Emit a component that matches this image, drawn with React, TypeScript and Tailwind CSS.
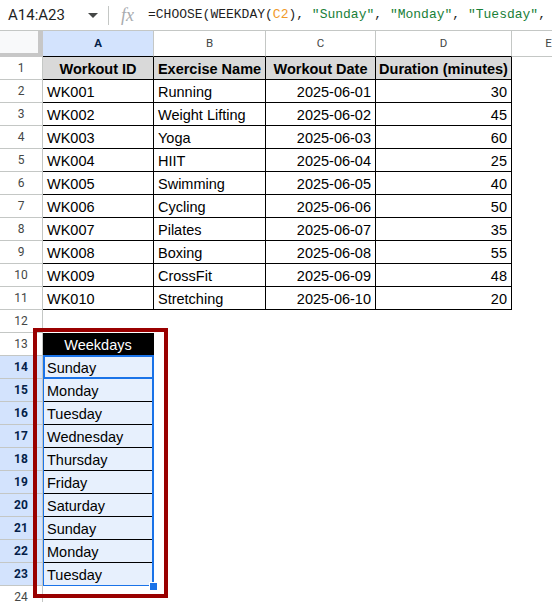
import React from 'react';

type Workout = [string, string, string, number];

const workouts: Workout[] = [
  ['WK001', 'Running', '2025-06-01', 30],
  ['WK002', 'Weight Lifting', '2025-06-02', 45],
  ['WK003', 'Yoga', '2025-06-03', 60],
  ['WK004', 'HIIT', '2025-06-04', 25],
  ['WK005', 'Swimming', '2025-06-05', 40],
  ['WK006', 'Cycling', '2025-06-06', 50],
  ['WK007', 'Pilates', '2025-06-07', 35],
  ['WK008', 'Boxing', '2025-06-08', 55],
  ['WK009', 'CrossFit', '2025-06-09', 48],
  ['WK010', 'Stretching', '2025-06-10', 20],
];

const weekdays = [
  'Sunday',
  'Monday',
  'Tuesday',
  'Wednesday',
  'Thursday',
  'Friday',
  'Saturday',
  'Sunday',
  'Monday',
  'Tuesday',
];

// column widths include the 1px right border
const colW = ['w-[111px]', 'w-[112px]', 'w-[110px]', 'w-[136px]'];

function RowNum({ n, selected }: { n: number; selected?: boolean }) {
  return (
    <div
      className={
        'flex w-[43px] shrink-0 items-center justify-center border-r border-b border-[#c4c7c5] font-["Roboto",sans-serif] text-[12px] ' +
        (selected ? 'bg-[#d3e3fd] font-bold text-[#041e49]' : 'bg-white text-[#444746]')
      }
    >
      {n}
    </div>
  );
}

function Cell({
  w,
  children,
  className = '',
}: {
  w: string;
  children?: React.ReactNode;
  className?: string;
}) {
  return (
    <div
      className={`${w} flex shrink-0 items-end overflow-hidden whitespace-nowrap border-r border-b border-black px-[4px] pb-[1px] leading-[17px] ${className}`}
    >
      {children}
    </div>
  );
}

function FormulaBar() {
  return (
    <div className="flex h-[31px] items-center border-b border-[#c4c7c5] bg-white">
      <div className="w-[80px] pl-[8px] font-['Roboto',sans-serif] text-[15px] text-[#1f1f1f]">
        A14:A23
      </div>
      <svg width="10" height="5" viewBox="0 0 10 5" className="ml-[8px]">
        <path d="M0 0 L10 0 L5 5 Z" fill="#444746" />
      </svg>
      <div className="ml-[10px] h-[19px] w-px bg-[#c4c7c5]" />
      <span className="ml-[12px] w-[27px] font-['Liberation_Serif',serif] text-[18px] italic leading-none text-[#a8abaf]">
        fx
      </span>
      <div className="whitespace-nowrap font-['Liberation_Mono',monospace] text-[13px] text-[#1f1f1f]">
        =CHOOSE(WEEKDAY(<span className="text-[#f19a2a]">C2</span>),{' '}
        <span className="text-[#188038]">"Sunday"</span>,{' '}
        <span className="text-[#188038]">"Monday"</span>,{' '}
        <span className="text-[#188038]">"Tuesday"</span>,
      </div>
    </div>
  );
}

function ColumnHeaders() {
  const letters = ['A', 'B', 'C', 'D'];
  return (
    <div className="flex h-[26px] font-['Roboto',sans-serif] text-[11.5px]">
      <div className="w-[43px] shrink-0 border-r-[5px] border-b-[4px] border-[#c7c7c7] bg-[#f8f9fa]" />
      {letters.map((l, i) => (
        <div
          key={l}
          className={`${colW[i]} flex shrink-0 items-center justify-center border-r border-b border-r-[#c4c7c5] border-b-black ${
            i === 0 ? 'bg-[#d3e3fd] font-bold text-[#041e49]' : 'text-[#444746]'
          }`}
        >
          {l}
        </div>
      ))}
      <div className="flex w-[74px] shrink-0 items-center justify-center border-r border-b border-[#c4c7c5] text-[#444746]">
        E
      </div>
    </div>
  );
}

export default function App() {
  return (
    <div className="relative h-[602px] w-[552px] overflow-hidden bg-white font-['Liberation_Sans',Arial,sans-serif] text-[14.5px] text-black">
      <FormulaBar />
      <ColumnHeaders />

      <div className="flex h-[23px]">
        <RowNum n={1} />
        {['Workout ID', 'Exercise Name', 'Workout Date', 'Duration (minutes)'].map((h, i) => (
          <Cell key={h} w={colW[i]} className="justify-center bg-[#d9d9d9] !px-0 font-bold">
            {h}
          </Cell>
        ))}
      </div>

      {workouts.map((w, r) => (
        <div key={w[0]} className="flex h-[23px]">
          <RowNum n={r + 2} />
          <Cell w={colW[0]}>{w[0]}</Cell>
          <Cell w={colW[1]}>{w[1]}</Cell>
          <Cell w={colW[2]} className="justify-end">
            {w[2]}
          </Cell>
          <Cell w={colW[3]} className="justify-end">
            {w[3]}
          </Cell>
        </div>
      ))}

      <div className="flex h-[23px]">
        <RowNum n={12} />
      </div>

      <div className="flex h-[23px]">
        <RowNum n={13} />
        <Cell w={colW[0]} className="justify-center bg-black text-white">
          Weekdays
        </Cell>
      </div>

      {weekdays.map((d, i) => (
        <div key={i} className="flex h-[23px]">
          <RowNum n={i + 14} selected />
          <Cell w={colW[0]} className="bg-[#e7f0fd]">
            {d}
          </Cell>
        </div>
      ))}

      <div className="flex h-[23px]">
        <RowNum n={24} />
      </div>

      {/* selection range A14:A23 */}
      <div className="pointer-events-none absolute left-[43px] top-[355px] h-[231px] w-[111px] border border-r-2 border-[#1a73e8]" />
      {/* active cell A14 */}
      <div className="pointer-events-none absolute left-[43px] top-[355px] h-[24px] w-[111px] border-2 border-[#1a73e8]" />
      {/* fill handle */}
      <div className="absolute left-[149px] top-[582px] h-[9px] w-[9px] border border-white bg-[#1a73e8]" />

      {/* annotation box */}
      <div className="pointer-events-none absolute left-[33px] top-[328px] h-[270px] w-[135px] border-4 border-[#990000]" />
    </div>
  );
}
